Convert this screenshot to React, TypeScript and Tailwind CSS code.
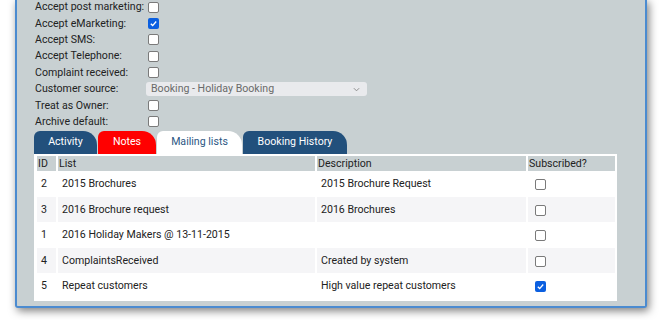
import React from "react";

const formRows: { label: string; kind: "check" | "select"; checked?: boolean }[] = [
  { label: "Accept post marketing:", kind: "check" },
  { label: "Accept eMarketing:", kind: "check", checked: true },
  { label: "Accept SMS:", kind: "check" },
  { label: "Accept Telephone:", kind: "check" },
  { label: "Complaint received:", kind: "check" },
  { label: "Customer source:", kind: "select" },
  { label: "Treat as Owner:", kind: "check" },
  { label: "Archive default:", kind: "check" },
];

const tabs = [
  { name: "Activity", w: "w-[63px]", cls: "bg-[#22507c] text-white" },
  { name: "Notes", w: "w-[58px]", cls: "bg-[#ff0000] text-white" },
  { name: "Mailing lists", w: "w-[85px]", cls: "bg-white text-[#2b5683]" },
  { name: "Booking History", w: "w-[104px]", cls: "bg-[#22507c] text-white" },
];

const lists = [
  { id: 2, list: "2015 Brochures", desc: "2015 Brochure Request", sub: false },
  { id: 3, list: "2016 Brochure request", desc: "2016 Brochures", sub: false },
  { id: 1, list: "2016 Holiday Makers @ 13-11-2015", desc: "", sub: false },
  { id: 4, list: "ComplaintsReceived", desc: "Created by system", sub: false },
  { id: 5, list: "Repeat customers", desc: "High value repeat customers", sub: true },
];

function Check({ on }: { on?: boolean }) {
  if (on) {
    return (
      <span className="flex h-[11px] w-[11px] items-center justify-center rounded-[2px] bg-[#0b5fe0]">
        <svg viewBox="0 0 10 10" className="h-[9px] w-[9px]">
          <path d="M2 5.2 L4.1 7.3 L8 2.8" fill="none" stroke="white" strokeWidth="1.5" />
        </svg>
      </span>
    );
  }
  return <span className="block h-[11px] w-[11px] rounded-[2px] border border-[#7a7a7a] bg-white" />;
}

export default function App() {
  return (
    <div className="h-[320px] w-[662px] overflow-hidden bg-white font-['Roboto',sans-serif] text-[10.6px] text-[#222]">
      <div className="ml-[15px] h-[309px] w-[632px] rounded-b-[3px] border-x-2 border-b-2 border-[#4b8bd0] bg-[#c8d0d2] shadow-[2px_3px_9px_rgba(0,0,0,0.5)]">
        <div className="-mt-[1px] pl-[17px]">
          {formRows.map((r) => (
            <div key={r.label} className="flex h-[16.4px] items-center pl-[1px]">
              <span className="w-[111px] whitespace-nowrap">{r.label}</span>
              {r.kind === "check" ? (
                <span className="ml-[2px]">
                  <Check on={r.checked} />
                </span>
              ) : (
                <div className="flex h-[14px] w-[221px] items-center justify-between rounded-[3px] bg-[#e9eaed] pl-[5px] pr-[7px] text-[#6a6a6a]">
                  <span>Booking - Holiday Booking</span>
                  <svg viewBox="0 0 8 5" className="h-[5px] w-[7px]">
                    <path d="M1 1 L4 4 L7 1" fill="none" stroke="#8a8a8a" strokeWidth="1.1" />
                  </svg>
                </div>
              )}
            </div>
          ))}

          <div className="mt-[1px] flex gap-[1px]">
            {tabs.map((t) => (
              <div
                key={t.name}
                className={`flex h-[23px] items-center justify-center rounded-tl-[6px] rounded-tr-[14px] pb-[1px] ${t.w} ${t.cls}`}
              >
                {t.name}
              </div>
            ))}
          </div>

          <div className="w-[583px] bg-white pb-[2px] pl-[3px] pr-[2px] pt-[2px]">
            <div className="grid grid-cols-[19px_257px_209px_87px] gap-x-[2px]">
              <div className="h-[15px] bg-[#c8d0d2] pl-[1px] leading-[15px]">ID</div>
              <div className="h-[15px] bg-[#c8d0d2] pl-[1px] leading-[15px]">List</div>
              <div className="h-[15px] bg-[#c8d0d2] pl-[1px] leading-[15px]">Description</div>
              <div className="h-[15px] bg-[#c8d0d2] pl-[1px] leading-[15px]">Subscribed?</div>
              {lists.map((l, i) => {
                const bg = i % 2 === 1 ? "bg-[#f5f5f7]" : "bg-white";
                return (
                  <React.Fragment key={l.id}>
                    <div className={`h-[25.5px] pl-[4px] pt-[5px] ${bg}`}>{l.id}</div>
                    <div className={`h-[25.5px] pl-[4px] pt-[5px] ${bg}`}>{l.list}</div>
                    <div className={`h-[25.5px] pl-[4px] pt-[5px] ${bg}`}>{l.desc}</div>
                    <div className={`h-[25.5px] pl-[7px] pt-[8px] ${bg}`}>
                      <Check on={l.sub} />
                    </div>
                  </React.Fragment>
                );
              })}
            </div>
          </div>
        </div>
      </div>
    </div>
  );
}
